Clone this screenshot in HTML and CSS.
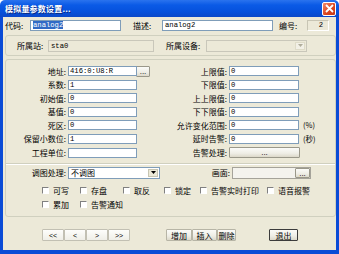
FILE: index.html
```html
<!DOCTYPE html>
<html>
<head>
<meta charset="utf-8">
<link rel="stylesheet" href="styles.css">
</head>
<body>
<div class="window">
  <div class="titlebar">
    <span class="title">模拟量参数设置...</span>
    <span class="close"><svg width="9" height="9" viewBox="0 0 9 9"><path d="M1 1L8 8M8 1L1 8" stroke="#fff" stroke-width="1.8"/></svg></span>
  </div>
  <div class="frame">
    <div class="row1">
      <span class="lbl w-code">代码:</span>
      <div class="field f-code"><span class="sel">analog2</span></div>
      <span class="lbl w-desc">描述:</span>
      <div class="field f-desc">analog2</div>
      <span class="lbl w-num">编号:</span>
      <div class="numbox">2</div>
    </div>

    <div class="group g1">
      <span class="lbl w-sta">所属站:</span>
      <div class="field disabled f-sta">sta0</div>
      <span class="lbl w-dev">所属设备:</span>
      <div class="field disabled f-dev"><span class="drop dis"><svg width="5" height="3" viewBox="0 0 5 3"><path d="M0 0H5L2.5 3Z" fill="#b0ad9c"/></svg></span></div>
    </div>

    <div class="group g2">
      <div class="grid">
        <span class="lbl l1">地址:</span>
        <div class="field">416:0:U8:R</div>
        <div class="btn dots">...</div>
        <span class="lbl l2">上限值:</span>
        <div class="field">0</div>
        <span class="unit"></span>

        <span class="lbl l1">系数:</span>
        <div class="field">1</div>
        <span></span>
        <span class="lbl l2">下限值:</span>
        <div class="field">0</div>
        <span class="unit"></span>

        <span class="lbl l1">初始值:</span>
        <div class="field">0</div>
        <span></span>
        <span class="lbl l2">上上限值:</span>
        <div class="field">0</div>
        <span class="unit"></span>

        <span class="lbl l1">基值:</span>
        <div class="field">0</div>
        <span></span>
        <span class="lbl l2">下下限值:</span>
        <div class="field">0</div>
        <span class="unit"></span>

        <span class="lbl l1">死区:</span>
        <div class="field">0</div>
        <span></span>
        <span class="lbl l2">允许变化范围:</span>
        <div class="field">0</div>
        <span class="unit">(%)</span>

        <span class="lbl l1">保留小数位:</span>
        <div class="field">1</div>
        <span></span>
        <span class="lbl l2">延时告警:</span>
        <div class="field">0</div>
        <span class="unit">(秒)</span>

        <span class="lbl l1">工程单位:</span>
        <div class="field"></div>
        <span></span>
        <span class="lbl l2">告警处理:</span>
        <div class="btn wide">...</div>
        <span class="unit"></span>
      </div>
      <div class="sep"></div>
      <div class="maprow">
        <span class="lbl l1">调图处理:</span>
        <div class="field combo">不调图<span class="drop"><svg width="5" height="3" viewBox="0 0 5 3"><path d="M0 0H5L2.5 3Z" fill="#000"/></svg></span></div>
        <span class="lbl l3">画面:</span>
        <div class="field pic"><span class="btn picbtn">...</span></div>
      </div>
      <div class="checks">
        <label class="chk c1"><i></i>可写</label>
        <label class="chk c2"><i></i>存盘</label>
        <label class="chk c3"><i></i>取反</label>
        <label class="chk c4"><i></i>锁定</label>
        <label class="chk c5"><i></i>告警实时打印</label>
        <label class="chk"><i></i>语音报警</label>
      </div>
      <div class="checks">
        <label class="chk c1"><i></i>累加</label>
        <label class="chk"><i></i>告警通知</label>
      </div>
    </div>

    <div class="bottom">
      <div class="nav">
        <div class="btn nb">&lt;&lt;</div>
        <div class="btn nb">&lt;</div>
        <div class="btn nb">&gt;</div>
        <div class="btn nb">&gt;&gt;</div>
      </div>
      <div class="edit">
        <div class="btn eb b-add">增加</div>
        <div class="btn eb b-ins">插入</div>
        <div class="btn eb b-del">删除</div>
      </div>
      <div class="btn exit">退出</div>
    </div>
  </div>
</div>
</body>
</html>
```

FILE: styles.css
```css
* { box-sizing: border-box; }
html, body { margin: 0; padding: 0; background: #fff; }
body {
  font-family: "Noto Sans CJK SC", "Noto Sans", sans-serif;
  font-size: 8px;
  color: #000;
}
.window {
  width: 339px;
  height: 254px;
  display: flex;
  flex-direction: column;
  overflow: hidden;
}
.titlebar {
  height: 17px;
  flex: none;
  background: linear-gradient(#2a73ee 0%, #0a5ae6 30%, #0651dc 70%, #0a48c8 100%);
  border-radius: 5px 5px 0 0;
  display: flex;
  align-items: center;
  padding: 0 3px 0 5px;
}
.title {
  color: #fff;
  font-weight: bold;
  font-size: 8px;
  line-height: 10px;
  letter-spacing: 0.2px;
  flex: 1;
  text-shadow: 1px 1px 0 #0a2a80;
}
.close {
  width: 14px;
  height: 14px;
  border: 1px solid #fff;
  border-radius: 2px;
  background: linear-gradient(135deg, #f08a6c, #d9431c 60%, #c33a18);
  display: flex;
  align-items: center;
  justify-content: center;
}
.frame {
  flex: 1;
  background: #ece9d8;
  border: 3px solid #0a4bd6;
  border-top: 0;
  border-bottom-width: 4px;
  display: flex;
  flex-direction: column;
  padding: 0 0 0 2px;
}
.lbl { line-height: 11px; white-space: nowrap; }
.field {
  height: 10px;
  background: #fff;
  border: 1px solid #7f9db9;
  font-family: "Liberation Mono", monospace;
  font-size: 7.2px;
  line-height: 8px;
  padding-left: 1px;
  white-space: nowrap;
  overflow: hidden;
  position: relative;
}
.row1 {
  margin-top: 3px;
  height: 11px;
  display: flex;
  align-items: center;
}
.row1 .field { height: 11px; line-height: 9px; padding-left: 2px; }
.w-code { width: 25px; }
.f-code { width: 91px; }
.w-desc { width: 29px; margin-left: 12px; }
.f-desc { width: 111px; }
.w-num { width: 28px; margin-left: 6px; }
.numbox {
  width: 22px;
  height: 11px;
  border: 1px solid #c8c5b4;
  border-right-color: #fff;
  border-bottom-color: #fff;
  font-family: "Liberation Mono", monospace;
  font-size: 7.2px;
  line-height: 9px;
  text-align: right;
  padding-right: 5px;
}
.sel { background: #316ac5; color: #fff; }

.group {
  width: 331px;
  border: 1px solid #d0d0bf;
  border-radius: 3px;
}
.g1 {
  margin-top: 4px;
  height: 21px;
  display: flex;
  align-items: center;
}
.w-sta { width: 31px; margin-left: 11px; }
.f-sta { width: 106px; height: 12px; line-height: 10px; background: #ece9d8; border-color: #c9c7ba; padding-left: 2px; }
.w-dev { width: 40px; margin-left: 12px; }
.f-dev { width: 101px; height: 12px; background: #ece9d8; border-color: #c9c7ba; }
.drop {
  position: absolute;
  right: 1px;
  top: 1px;
  bottom: 1px;
  width: 10px;
  background: #ece9d8;
  border: 1px solid #c7c5b2;
  display: flex;
  align-items: center;
  justify-content: center;
}
.drop.dis { border-color: #dedbc8; background: #f2f0e6; }

.g2 {
  margin-top: 3px;
  height: 158px;
  display: flex;
  flex-direction: column;
}
.grid {
  margin-top: 6px;
  display: grid;
  grid-template-columns: 60px 69px 15px 77px 70px 1fr;
  grid-auto-rows: 10px;
  row-gap: 3.6px;
  align-items: center;
}
.grid > .field { margin-left: 2px; width: 69px; }
.l1, .l2, .l3 { text-align: right; }
.l2 + .field { margin-left: 2px; width: 70px; }
.unit { padding-left: 6px; font-size: 7.5px; white-space: nowrap; line-height: 10px; }
.btn {
  background: linear-gradient(#fbfbf8, #eeede5 60%, #dcd8c9);
  border: 1px solid #9a988a;
  border-radius: 1px;
  display: flex;
  align-items: center;
  justify-content: center;
  line-height: 9px;
}
.dots { height: 11px; width: 14px; margin-left: 1px; font-family: "Liberation Sans", sans-serif; font-size: 8px; align-items: flex-start; }
.wide { height: 11px; margin-left: 2px; width: 71px; font-family: "Liberation Sans", sans-serif; font-size: 8px; align-items: flex-start; }
.sep {
  margin-top: 5px;
  height: 2px;
  border-top: 1px solid #d0d0bf;
  border-bottom: 1px solid #fff;
}
.maprow {
  margin-top: 2px;
  height: 12px;
  display: flex;
  align-items: center;
}
.maprow .l1 { width: 60px; }
.combo {
  margin-left: 2px;
  width: 92px;
  height: 12px;
  font-family: "Noto Sans CJK SC", sans-serif;
  font-size: 8px;
  line-height: 10px;
  padding-left: 2px;
}
.l3 { width: 70px; }
.pic {
  margin-left: 2px;
  width: 79px;
  height: 12px;
  background: #f4f3ee;
  border-color: #a5a39a;
}
.picbtn {
  position: absolute;
  right: 0;
  top: 0;
  bottom: 0;
  width: 15px;
  font-family: "Liberation Sans", sans-serif;
  font-size: 8px;
  align-items: flex-start;
}
.checks {
  display: flex;
  align-items: center;
  height: 10px;
  padding-left: 36px;
}
.checks:first-of-type { margin-top: 0; }
.maprow + .checks { margin-top: 7px; }
.checks + .checks { margin-top: 4px; }
.chk { display: flex; align-items: center; line-height: 10px; white-space: nowrap; }
.chk i {
  width: 7px;
  height: 7px;
  background: #fff;
  border: 1px solid #fff;
  border-top-color: #808080;
  border-left-color: #808080;
  margin-right: 4px;
  display: block;
}
.c1 { width: 38px; }
.c2 { width: 43px; }
.c3 { width: 41px; }
.c4 { width: 36px; }
.c5 { width: 67px; }

.bottom {
  margin-top: 12px;
  height: 12px;
  display: flex;
  align-items: stretch;
  padding-left: 37px;
}
.nav { display: flex; }
.nb {
  width: 22px;
  font-family: "Liberation Sans", sans-serif;
  font-size: 7px;
  border-color: #c2c0b3;
  background: linear-gradient(#fdfdfb, #efeee7);
}
.edit { display: flex; margin-left: 36px; }
.eb { font-size: 8px; border-color: #b7b5a6; }
.b-add { width: 26px; }
.b-ins { width: 25px; }
.b-del { width: 19px; }
.exit {
  margin-left: 33px;
  width: 29px;
  border: 1px solid #3c3c3c;
  font-size: 8px;
}
```
